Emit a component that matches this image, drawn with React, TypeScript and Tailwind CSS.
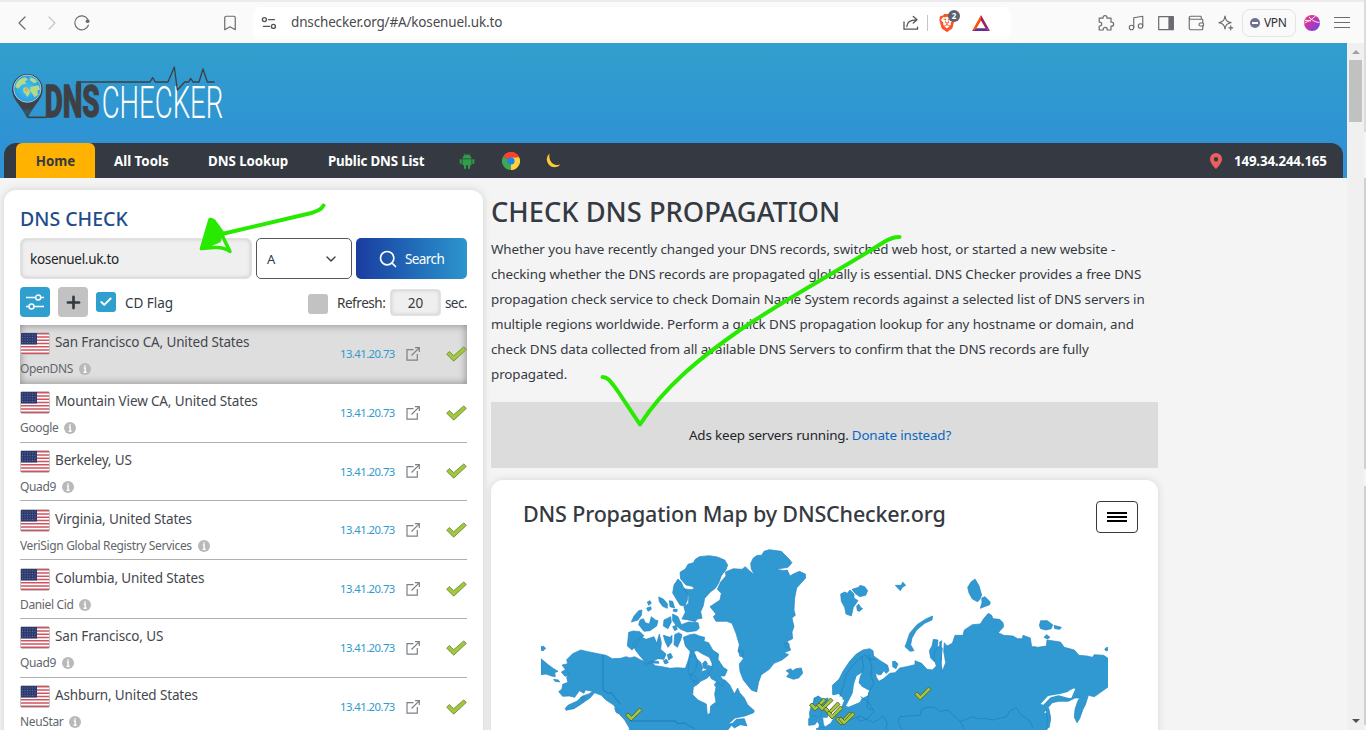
import type { ReactNode } from "react";
import { Bookmark, Music, Wallet, ChevronDown, Search, Plus, Check } from "lucide-react";
import { SiBrave } from "react-icons/si";

const FONT = "font-['Noto_Sans','Open_Sans',sans-serif]";

const servers = [
  { place: "San Francisco CA, United States", isp: "OpenDNS" },
  { place: "Mountain View CA, United States", isp: "Google" },
  { place: "Berkeley, US", isp: "Quad9" },
  { place: "Virginia, United States", isp: "VeriSign Global Registry Services" },
  { place: "Columbia, United States", isp: "Daniel Cid" },
  { place: "San Francisco, US", isp: "Quad9" },
  { place: "Ashburn, United States", isp: "NeuStar" },
];

const lines = [
  "Whether you have recently changed your DNS records, switched web host, or started a new website -",
  "checking whether the DNS records are propagated globally is essential. DNS Checker provides a free DNS",
  "propagation check service to check Domain Name System records against a selected list of DNS servers in",
  "multiple regions worldwide. Perform a quick DNS propagation lookup for any hostname or domain, and",
  "check DNS data collected from all available DNS Servers to confirm that the DNS records are fully",
  "propagated.",
];

function Stroke({ children, className = "" }: { children: ReactNode; className?: string }) {
  return (
    <svg viewBox="0 0 18 18" className={`h-[18px] w-[18px] shrink-0 ${className}`} fill="none" stroke="currentColor" strokeWidth="1.2" strokeLinecap="round" strokeLinejoin="round">
      {children}
    </svg>
  );
}

function BrowserBar() {
  return (
    <div className="flex h-[43px] w-[1364px] items-center border-t-2 border-[#ebebf0] bg-[#fafafa] pl-[13px] text-[#6b6b70]">
      <Stroke><path d="M12 3L6 9l6 6" /></Stroke>
      <Stroke className="ml-3 text-[#c4c4c8]"><path d="M6 3l6 6-6 6" /></Stroke>
      <Stroke className="ml-3">
        <path d="M15.4 11.2A7 7 0 1 1 14.8 5.2" />
        <circle cx="14.6" cy="7.2" r="1.9" fill="currentColor" stroke="none" />
      </Stroke>
      <Bookmark className="ml-[130px] h-[18px] w-[18px]" strokeWidth={1.6} />
      <div className="ml-[14px] flex h-8 w-[758px] items-center rounded-lg bg-white pr-[21px] pl-[7px]">
        <Stroke className="text-[#55555a]">
          <circle cx="4.4" cy="5.6" r="2" strokeWidth="1.4" />
          <path d="M8.5 5.6H14.5M3.5 12.4H9.5" strokeWidth="1.4" />
          <circle cx="13.4" cy="12.4" r="2" strokeWidth="1.4" />
        </Stroke>
        <span className="ml-[13px] text-[13.5px] tracking-[-0.16px] text-[#4a4a4e]">dnschecker.org/#A/kosenuel.uk.to</span>
        <Stroke className="ml-auto text-[#55555a]">
          <path d="M2 8v7.2h13.5v-2M4.8 12.6C5 8 8 5.800 14.500 5.800M11.300 2.500l3.700 3.300-3.700 3.300" strokeWidth="1.3" />
        </Stroke>
        <span className="ml-[7px] h-4 w-px bg-[#c4c4c8]" />
        <span className="relative ml-[10px] h-[18px] w-[18px]">
          <SiBrave className="h-[18px] w-[18px] text-[#fb542b]" />
          <span className="absolute -top-[4px] left-[10px] flex h-3 w-3 items-center justify-center rounded-full bg-[#5d6172] text-[8px] font-bold text-white">2</span>
        </span>
        <svg viewBox="0 0 18 18" className="ml-4 h-[18px] w-[18px]">
          <path d="M9 1L0 17 4.500 14.200 9 6.500z" fill="#ff5000" />
          <path d="M9 1l9 16-4.500-2.800L9 6.500z" fill="#9e1f63" />
          <path d="M0 17h18l-4.500-2.800h-9z" fill="#662d91" />
        </svg>
      </div>
      <Stroke className="ml-[86px]">
        <path d="M2.200 4.200H6V3.600a2 2 0 0 1 4 0v.6h4V8.200h.6a2 2 0 0 1 0 4H14V16H10.200v-.6a2 2 0 0 0-4 0V16H2.200V12h.6a1.900 1.900 0 0 0 0-3.800H2.200z" />
      </Stroke>
      <Music className="ml-3 h-[18px] w-[18px]" strokeWidth={1.5} />
      <Stroke className="ml-3"><rect x="1.700" y="2.700" width="14.600" height="13" /><path d="M12 3h4v12.400h-4z" fill="currentColor" /></Stroke>
      <Wallet className="ml-3 h-[18px] w-[18px]" strokeWidth={1.5} />
      <Stroke className="ml-3">
        <path d="M8 2C8.600 6.400 9.800 7.700 14 8.600 9.800 9.500 8.600 10.800 8 15 7.300 10.800 6.100 9.500 2 8.600 6.100 7.700 7.300 6.400 8 2z" />
        <path d="M13.800 11.800v4M11.800 13.800h4" />
      </Stroke>
      <div className="ml-[7px] flex h-7 w-[54px] items-center gap-1 rounded-lg border border-[#e3e3e8] pl-[7px] text-[12px] text-[#303034]">
        <span className="flex h-[10px] w-[10px] items-center justify-center rounded-full bg-[#6f7390]"><span className="h-[2px] w-[6px] bg-white" /></span>
        <span className="tracking-[-0.4px]">VPN</span>
      </div>
      <svg viewBox="0 0 16 16" className="ml-2 h-4 w-4">
        <defs>
          <linearGradient id="orb" x1="0" y1="0" x2="1" y2="1"><stop offset="0" stopColor="#f0456b" /><stop offset=".5" stopColor="#c035b5" /><stop offset="1" stopColor="#5b4be0" /></linearGradient>
        </defs>
        <circle cx="8" cy="8" r="8" fill="url(#orb)" />
        <path d="M.5 8Q6 6.500 11.500 1M5 2q4 5 10.500 5.500M1 5.500Q4 5 7 6" stroke="#fff" strokeWidth=".9" fill="none" />
      </svg>
      <div className="ml-[14px] flex w-4 flex-col gap-1">
        <span className="h-px bg-[#6b6b70]" /><span className="h-px bg-[#6b6b70]" /><span className="h-px bg-[#6b6b70]" />
      </div>
    </div>
  );
}

function Logo() {
  return (
    <svg viewBox="0 0 720 210" className="h-[70px] w-[240px]">
      <defs>
        <radialGradient id="sea"><stop offset="0" stopColor="#3fc4ee" /><stop offset="1" stopColor="#2a9fe0" /></radialGradient>
        <linearGradient id="pin" x1="0" y1="0" x2="0" y2="1"><stop offset=".5" stopColor="#3e4148" /><stop offset=".7" stopColor="#36566c" /><stop offset="1" stopColor="#3e4148" /></linearGradient>
      </defs>
      <path d="M82 174C74 146 36 124 36 88a46 46 0 0 1 92 0C128 124 90 146 82 174z" fill="url(#pin)" />
      <path d="M44 112L82 174l38-62z" fill="url(#pin)" />
      <path d="M82 172h56" stroke="#3e4045" strokeWidth="5" />
      <circle cx="82" cy="86" r="41" fill="url(#sea)" stroke="#d5eefa" strokeWidth="2" />
      <path d="M48 72q10-18 28-20l8 8-10 4 6 6-14 4-12 12-8-6z M92 52l14 6 6 8-10 4-8-6-6-4z M92 80l24-4 4 12-8 4 2 12-10 8-8-12-6-8z" fill="#b5d98a" />
      <path d="M70 84l8-2 10 6 2 10-8 14-6-10-6-6z" fill="#b5d98a" />
      <path d="M74 86l6-3 5 6-5 6-6-3z" fill="#eca437" />
      <text transform="translate(134 172) scale(0.62 1)" fontFamily="Roboto, sans-serif" fontWeight="800" fontSize="132" fill="#3e4045" stroke="#3e4045" strokeWidth="4" textLength="266" lengthAdjust="spacingAndGlyphs">DNS</text>
      <text transform="translate(305 173) scale(0.614 1)" fontFamily="Roboto, sans-serif" fontWeight="300" fontSize="134" fill="#fff" textLength="594" lengthAdjust="spacingAndGlyphs">CHECKER</text>
      <path d="M229 64h14v30h-14z" fill="#3e4045" />
      <path d="M230 66H450l8-13 8 13h38l19-45 9 69 22-24h12l6-11 7 11h18l12-39 13 39h22" fill="none" stroke="#3e4045" strokeWidth="4" strokeLinejoin="round" />
    </svg>
  );
}

function ChromeLogo() {
  return (
    <svg viewBox="0 0 18 18" className="h-[18px] w-[18px]">
      <path d="M9 9L1.200 4.500A9 9 0 0 1 16.800 4.500z" fill="#f4442e" />
      <path d="M9 9l7.800-4.500A9 9 0 0 1 9 18z" fill="#fdd23a" />
      <path d="M9 9v9A9 9 0 0 1 1.200 4.500z" fill="#3ea852" />
      <path d="M9 5.500h7.300a9 9 0 0 1-7.300 12.500l3.500-7z" fill="#fdd23a" />
      <path d="M9 5.200L1.800 3.800A9 9 0 0 1 16.600 4.200L16.900 5.200z" fill="#f4442e" />
      <circle cx="9" cy="9" r="3.600" fill="#1a84f0" />
    </svg>
  );
}

function Header() {
  return (
    <header className="flex h-[135px] flex-col bg-linear-to-b from-[#319fcd] to-[#2f92d4] to-75%">
      <div className="h-[100px] pt-[17px]"><Logo /></div>
      <nav className="mr-1 ml-1 flex h-[35px] items-stretch rounded-t-xl bg-[#353a42] pl-3 text-[13.3px] font-bold text-white">
        <div className="flex w-[79px] items-center justify-center rounded-t-md bg-[#ffb200] pt-[2px] text-[#353a42]">Home</div>
        <div className="ml-[19px] flex w-[94px] items-center pt-[2px] whitespace-nowrap">All Tools</div>
        <div className="flex w-[120px] items-center pt-[2px] tracking-[-0.05px] whitespace-nowrap">DNS Lookup</div>
        <div className="flex w-[131px] items-center pt-[2px] tracking-[-0.15px] whitespace-nowrap">Public DNS List</div>
        <svg viewBox="0 0 16 16" className="h-4 w-4 self-center" fill="#2f9e44">
          <path d="M3.500 5.500a4.500 4 0 0 1 9 0z M3.500 6.200h9v6h-9z M.7 6.300h2v4.500h-2z M13.300 6.300h2v4.500h-2z M5 12h2v3.700H5z M9 12h2v3.700H9z" />
          <path d="M5 .6l1.200 1.800M11 .6L9.800 2.400" stroke="#2f9e44" strokeWidth=".7" />
        </svg>
        <div className="ml-[27px] flex items-center"><ChromeLogo /></div>
        <svg viewBox="0 0 16 16" className="ml-[25px] h-4 w-4 self-center"><path d="M4.500.5A7.800 7.800 0 1 0 15.500 11.500C9.500 13.500 3 9 4.500.5z" fill="#fdcb33" /></svg>
        <svg viewBox="0 0 12 16" className="ml-auto h-4 w-3 self-center"><path fillRule="evenodd" d="M6 0a6 6 0 0 1 6 6c0 4.500-6 10-6 10S0 10.500 0 6a6 6 0 0 1 6-6zm0 4a2.200 2.200 0 1 0 0 4.400A2.200 2.200 0 0 0 6 4z" fill="#eb5f5f" /></svg>
        <span className="ml-3 w-[109px] self-center pt-[2px] tracking-[-0.15px]">149.34.244.165</span>
      </nav>
    </header>
  );
}

function Flag() {
  return (
    <svg viewBox="0 0 30 23" className="h-[23px] w-[30px] shrink-0">
      <rect x=".5" y=".5" width="29" height="22" rx="1.500" fill="#fff" stroke="#c4c4c4" />
      <path d="M1 1.800h28M1 5h28M1 8.200h28M1 11.500h28M1 14.800h28M1 18h28M1 21.300h28" stroke="#cc5560" strokeWidth="1.500" />
      <path d="M1 1h16v11.500H1z" fill="#2c3a6e" />
      <path d="M2 3h14M2 5.500h14M2 8h14M2 10.500h14" stroke="#6f7dae" strokeWidth=".8" strokeDasharray="1 1.500" />
    </svg>
  );
}

function Tick() {
  return (
    <svg viewBox="0 0 21 16" className="h-4 w-[21px]">
      <path d="M.7 8.200L3.300 5.500 7.700 9.700 17.800.9 20.300 3.400 7.700 15.200z" fill="#a2c93e" stroke="#71893f" strokeWidth=".9" strokeLinejoin="round" />
    </svg>
  );
}

function Info() {
  return (
    <svg viewBox="0 0 12 12" className="h-3 w-3"><circle cx="6" cy="6" r="6" fill="#b9b9b9" /><path d="M6 2.200v1.500M4.800 5h1.400v4M4.600 9.200h3" stroke="#fff" strokeWidth="1.400" fill="none" /></svg>
  );
}

function CheckPanel() {
  return (
    <section className="mt-3 ml-1 flex h-[560px] w-[479px] flex-col rounded-t-xl bg-white px-4 pt-[15px] shadow-[0_0_8px_rgba(0,0,0,0.15)]">
      <h2 className="h-[33px] text-[19.500px] leading-[28px] font-medium whitespace-nowrap text-[#1f4c89]">DNS CHECK</h2>
      <div className="flex h-[41px] gap-1">
        <div className="flex w-[232px] items-center rounded-md border border-[#e2e2e2] bg-[#efefef] pt-[2px] pl-[9px] text-[13.5px] tracking-[-0.3px] text-[#212529] shadow-[inset_0_0_4px_rgba(0,0,0,0.18)]">kosenuel.uk.to</div>
        <div className="flex w-24 items-center justify-between rounded-[5px] border border-[#55595e] pt-[2px] pr-3 pl-[10px] text-[13px] text-[#353a42]">A<ChevronDown className="mb-[2px] h-4 w-4" strokeWidth={2} /></div>
        <div className="flex w-[111px] items-center rounded-[5px] bg-linear-to-r from-[#1b3ca0] to-[#2e95cd] pl-[22px] text-[13.5px] text-white"><Search className="mr-[7px] h-5 w-5" strokeWidth={2} /><span className="pt-[2px] tracking-[-0.6px]">Search</span></div>
      </div>
      <div className="mt-2 flex h-[30px] items-center text-[13.5px] text-[#353a42]">
        <div className="flex h-[30px] w-[30px] items-center justify-center rounded bg-[#2f9fd0]">
          <svg viewBox="0 0 18 16" className="h-4 w-[18px]" fill="none" stroke="#fff" strokeWidth="1.400"><path d="M0 3.500h9.500M15 3.500h3M0 12.500h3M8 12.500h10" /><circle cx="12.200" cy="3.500" r="2.500" /><circle cx="5.500" cy="12.500" r="2.500" /></svg>
        </div>
        <div className="ml-2 flex h-[30px] w-[30px] items-center justify-center rounded bg-[#c2c2c2]"><Plus className="h-[19px] w-[19px] text-[#353a42]" strokeWidth={3.4} /></div>
        <div className="ml-2 flex h-5 w-5 items-center justify-center rounded-[3px] bg-[#2f9fd0]"><Check className="h-[14px] w-[14px] text-white" strokeWidth={3.2} /></div>
        <span className="mt-[3px] ml-[9px] tracking-[-0.05px]">CD Flag</span>
        <div className="mt-[3px] ml-auto h-5 w-5 rounded-[3px] bg-[#c2c2c2]" />
        <span className="mt-[3px] ml-[9px] w-[53px] tracking-[-0.45px]">Refresh:</span>
        <div className="mt-[1px] flex h-[27px] w-[51px] items-center justify-center rounded border border-[#e2e2e2] bg-[#efefef] pt-px shadow-[inset_0_0_4px_rgba(0,0,0,0.18)]">20</div>
        <span className="mt-[3px] ml-1 w-[22px] tracking-[-0.6px]">sec.</span>
      </div>
      <div className="mt-2 flex flex-col">
        {servers.map((s, i) => (
          <div key={i} className={`flex h-[58.8px] shrink-0 items-center ${i === 0 ? "bg-[#dedede] shadow-[inset_0_0_8px_rgba(0,0,0,0.4)]" : "border-b border-[#b0b0b0]"}`}>
            <div className="flex h-full flex-1 flex-col pt-[7.400px]">
              <div className="flex h-[23px] gap-[5px]"><Flag /><span className="text-[13.5px] leading-[20px] tracking-[-0.14px] whitespace-nowrap text-[#43474d]">{s.place}</span></div>
              <div className="mt-[5px] flex items-center gap-[6px] text-[12px] leading-[18px] tracking-[-0.36px] whitespace-nowrap text-[#62666b]">{s.isp}<Info /></div>
            </div>
            <span className="w-[66px] pt-[1px] text-[11.300px] tracking-[-0.55px] text-[#2f9acb]">13.41.20.73</span>
            <svg viewBox="0 0 14 14" className="h-[14px] w-[14px]" fill="none" stroke="#7b8187" strokeWidth="1.200"><path d="M7.500 2.700H1v10.500h10.300V7M9 .7h4.300V5M13.200.8L5.500 8.500" /></svg>
            <span className="ml-[26px]"><Tick /></span>
          </div>
        ))}
      </div>
    </section>
  );
}

const LAND = "#3099d1";
const EDGE = "#2585c4";

function WorldMap() {
  return (
    <svg viewBox="541 548 567 182" className="h-[182px] w-[567px]" fill={LAND} stroke={EDGE} strokeWidth="2" strokeLinejoin="round">
      <g transform="translate(480 470) scale(0.33333)">
        <path d="M183 530l8-1 6 6-7 7-7-1z M183 566l20 17 18 13 13 8-10 4 2 12-12-2-16-6-15 2z M221 628l14 2 4 6-14-2z M244 606l16-9 12 5-3 14-14 3z" />
        <path d="M256 715l8-9 28-13 14-14 22-8 10-7-22-4-4 10-14-8-14 20-16-4-20 1-12-14 10-8 2-14 16-6-4-14 9-14-14-12-9-12 17-4-3-12 18-18 24-11 22 5 30 6 24 5 19 10 25-1 16-5 12 4 14-4 20 11 20 6 6-4 16 14 20 3 24 5 22-2 24 2 10-28 6-28 9 4 10 24 11 10 6 16-4 12 14-4 5-16 13 5-2 20-12 14-20 10-22 18-2 22 16 16 25 12 3 32 8-4 2-22 16-12-4-24 4-20-5-8 12-16 20 2 14 14 14 28 10-18 6 14 14 16 10 20 20 18-2 6-26 10-30 6-20 18 12-2 12-12 24-2 8 22-20-4-18 10-8-8-20 24v10H448v-26l-14-24-20-22-12-22-24-16-14-14-20-8-14 16-26 18-22 14-24 5z" />
        <path d="M628 560l16-4 8 16-4 24-14 22-10-10z M668 580l8-8 6 8-4 16-8-2z M628 612l14 4 12 14-8 4-14-8z M404 715l10 2 2 14-8-4z M302 683l12-2-4 12z M638 632l20 6-10 8z" />
        <path d="M446 487l14-4 20 2 12 12-14 12-10 18-12 13-14-12z M482 500l16 8 24-8 8 20 8-28 6 26-2 20 16 14-6 16-18-2-20 10-22-4-12-14-14-18-8-20z M495 577l20-3 20 0 2 6-20-1-22 4z M550 572l10-4 5 10-10 4z" />
        <path d="M486 420l-2 16-10 14-20 6 8-18 14-16z M480 450l10-4 6 12 12 4 6-22 12 10 8 2-4 16-20 14-18 2-8-10-8-10z M552 450l8-4 12-6 2 16-10 20-14-8z M578 432l16 8 10 24 22-8 28 2 4 16-8 8-28 4-20-8-12-10-12-16z M578 470l10-4 4 12-8 4z M536 381l14 6 12 14 0 14-14-6-10-14z M568 392l10 2 6 20-14-4z M502 396l8-4 4 8-8 6z M500 414l12-4 2 8-10 6z M580 418l12 0-2 8-10-2z" />
        <path d="M550 496l20 6 6-6 0 20-12 16-8-16z M584 494l12-6 10 6-4 16-10 22-10-8z M562 554l10-4 6 12-12 8z" />
        <path d="M610 502l20-8 14-2 14 6 16 4-2 12 14 4 12 22 18 12-2 16 16 24 12 8-8 18-14 0 10 12-2 20-16-14-18-10-8-16 10-14 0-16-8-18-24-12-12-8-20 4-16-18z" />
        <path d="M594 327l10 10 6 14 14 16-2 24-8 18-14-4-10-16-12-20 4-24z" />
        <path d="M640 278l6-10 12-8 30-3 24 4 22 9 9 15-5 14-14 18-8 22-10 16-14 10-18 20-4 22-8 18 4 20-14 2-6 8-24-6-16-2 10-20-4-16 14-12 0-20-14-22 22 2 10-4-8-6-18-4-16-18-2-20 16-10 8-14z" />
        <path d="M814 298L812 280 820 264 832 256 845 256 852 244 868 239 904 244 928 268 936 278 924 292 888 298 912 302 922 300 930 318 940 312 958 304 976 312 977 324 950 354 944 384 942 420 946 436 936 444 942 470 936 486 938 506 922 514 932 540 912 548 926 554 906 570 882 580 868 598 844 614 836 636 830 666 814 660 790 630 780 604 778 582 790 566 774 544 778 524 768 490 756 460 740 454 708 454 700 440 708 432 690 410 720 390 724 370 712 358 722 336 738 318 736 306 760 296 786 298 796 290 808 302 824 314z" />
        <path d="M776 542l12-2 2 16-10 4z M918 602l14-6 6 6 10-6 16-2 4 16-12 14-16 4-20-8 8-10z M914 518l14 4-4 12-8-2z" />
        <path d="M1002 684l14-6 4 18 12 8 14 26-4 12-14 0 2 18 10 30h-26l4-26-6-10-8 10-18 2 0-20 10-10z" />
        <path d="M369 556v104l14 10 10-2 16 20 12 14M448 753h138l8 8 20-2 30 18" fill="none" strokeWidth="4" />
      </g>
      <g transform="translate(800 530) scale(0.33333)">
        <path d="M122 192l12-6 8 4 8-10 12 12 0 12 12 8-14 20-6 26-16-6-4-20-10-18z M156 178l20-6 4-6 14 4 9 12-6 14-18 4-14-10z M170 228l6-6 6 10 6 4-10 8-6-2z M286 166l18 0 4-10 9 10-10 6-6 10-8-8z" />
        <path d="M503 172l10-16 12-9 12 20 8 28-6 14-6 6-16-8-10-18z M545 204l10-4 16 16-2 8-28 11 5-18z" />
        <path d="M398 258l-2 12-22 10-24 20-14 24-4 20 10 18-12 2-15-14 6-16 8-24 22-26 28-18z M388 362l8-14 4-20 14 2-2 24 0 32-8 10-12-12z M419 336l6-4-2 30 2 26-4 22-9 10 8-26z M278 394l8 0 8 8-6 14-10-6z" />
        <path d="M718 286l4-14 20 0 16 12-4 12-16 4-16-4z M762 286l22 6-4 6-16-2z M732 322l8-8 10 8-8 5z M914 357l8-6 2 10-6 2z" />
        <path d="M98 494l-1-28 20-18 12-24 20-30 20-22 20-12 20-4 10 6 2 16 20 14 22 14 4 16-12 12-20 0-8-6 2 14 8 12 16-10 16-14 16-2 14-14 20-4 26-6 0-12 20 8 16 18 16 2 12-12-8-24 4-22 12-14 10 6-4 40 4 30 10-26-6-34 2-26 8 10 16-8 8-24h24l4-16 24-16 24-2 10-16 14-16 10 6 4 10 20 2 10 10 2 12-16 18 16 8 28 2 14 8h14l2-10 22 8 4 26 10 0 8 2 26-4 2-18 40 6 12 16 30 8 14 16 24 2 16 4 6-8 28 2 20 14v60l-6 12-2 10-20 14-20 14-18-4-8 26-8 16-10 28-8 12-8-16 2-24 8-24 6-10-14 0-20 10-28 0-20 4-26 30 14 4 6 20-10 22v30H68l-4-14-16-14 28-6 16-10 16-26 16-20 10-24z" />
        <path d="M738 540l8-6 6 28-4 30-8 4 3-28z M28 550l6-24 20-28 16 10 14-4 0 14-14 16-6 22-14 8-4-8-16 6z" />
        <path d="M186 428l-16 10-8 24-4 28-20 38 8 2 34-14 4-10 20-10 4-14-22-12-10-12 4-20z M96 530l-2-16 30-6-4 22z M96 508l4-12 16-4 12 12-6 18-16-6z M722 522l22-24 36-6 32-8 14-8-12 28-8 0-30-8-24 6-22 22z M240 440l12-16 8 10-14 14z M804 484l20-10-6 20z" fill="#fff" stroke="none" />
        <path d="M120 500l12-40 8-30 22-28 22-20 12-8 10 14 20 0M186 380l4 30-4 18M206 374l10 40-4 22 10 24-16 28-2 26 18 30-16 20-24 10-14-12M182 500l20 14 0 20 20 6M150 570l30-12 40 20 30-20 12 20-4 20M294 576l6-16 60-4 6-20 30-6 14 6 10 8 24-4 14 14 22 20 20-6 16-8 20 6 20 0 24 4 40-10 10-18 20-8 12 20 24 16 14 24M294 576l12 24M480 572l14 28" fill="none" strokeWidth="3" />
      </g>
      <g fill="#a2c93e" stroke="#5d6b2d" strokeWidth="1">
        {[[625, 708], [914, 687], [809, 698], [816, 698], [823, 702], [826, 706], [835, 712], [838, 712]].map(([x, y], i) => (
          <path key={i} transform={`translate(${x} ${y})`} d="M.5 7L3 5l3.500 3.500L14.500 0 17 2.500 6 13z" />
        ))}
      </g>
    </svg>
  );
}

function Content() {
  return (
    <section className="ml-2 flex w-[667px] flex-col">
      <h1 className="mt-[16px] h-[38px] text-[27.300px] leading-[36px] font-medium whitespace-nowrap text-[#353a42]">CHECK DNS PROPAGATION</h1>
      <div className="mt-[5px] flex h-[150px] flex-col text-[13.4px] leading-[25px] tracking-[-0.095px] text-[#353a42]">
        {lines.map((l) => <span key={l} className="whitespace-nowrap">{l}</span>)}
      </div>
      <div className="mt-[15px] flex h-[66px] shrink-0 items-center justify-center gap-[3px] bg-[#dcdcdc] pr-[9px] text-[13.4px] tracking-[-0.16px] text-[#212529]">
        <span>Ads keep servers running.</span><span className="text-[#0b66c3]">Donate instead?</span>
      </div>
      <div className="mt-3 flex h-[270px] shrink-0 flex-col rounded-t-xl bg-white pt-[21px] shadow-[0_0_8px_rgba(0,0,0,0.12)]">
        <div className="flex justify-between pr-5 pl-8">
          <h2 className="text-[21.500px] leading-[25px] font-medium tracking-[-0.16px] whitespace-nowrap text-[#353a42]">DNS Propagation Map by DNSChecker.org</h2>
          <div className="flex h-8 w-[42px] flex-col items-center justify-center gap-[2px] rounded border border-[#353a42]">
            <span className="h-[2px] w-5 bg-black" /><span className="h-[2px] w-5 bg-black" /><span className="h-[2px] w-5 bg-black" />
          </div>
        </div>
        <div className="mt-[15px] ml-[50px]"><WorldMap /></div>
      </div>
    </section>
  );
}

function Annotations() {
  return (
    <svg viewBox="0 0 1366 730" className="pointer-events-none absolute top-0 left-0 h-[730px] w-[1366px]" fill="none" stroke="#27ea00" strokeWidth="4" strokeLinecap="round" strokeLinejoin="round">
      <path d="M323.500 205.500C321 211 313 213 305 214.500L222 234" />
      <path d="M210 219.500L201.500 248.500L219 241L222 232L214 221z" fill="#27ea00" strokeWidth="3.500" />
      <path d="M212 220L221 233L230 251.500Q225 247 214 247.500L201.500 248.500" strokeWidth="3.500" />
      <path d="M602.500 377C608 377 611 382 617 390L640 424.500C665 386 700 358 740 330C790 296 840 270 884 242Q892 237 899.500 237" />
    </svg>
  );
}

export default function App() {
  return (
    <div className={`relative flex h-[730px] w-[1366px] overflow-hidden bg-[#f4f4f4] ${FONT}`}>
      <div className="flex w-[1364px] flex-col">
        <BrowserBar />
        <div className="flex h-[687px]">
          <main className="w-[1347px] overflow-hidden">
            <Header />
            <div className="flex h-[552px] overflow-hidden"><CheckPanel /><div className="flex flex-col"><Content /></div></div>
          </main>
          <div className="flex w-[17px] flex-col items-center bg-[#f0f0f0] pt-[7px] pb-[7px]">
            <svg viewBox="0 0 8 4" className="h-1 w-2"><path d="M0 4l4-4 4 4z" fill="#a0a0a0" /></svg>
            <div className="mt-[6px] h-[62px] w-[13px] bg-[#c1c1c1]" />
            <svg viewBox="0 0 8 4" className="mt-auto h-1 w-2"><path d="M0 0l4 4 4-4z" fill="#505050" /></svg>
          </div>
        </div>
      </div>
      <div className="flex w-[2px] flex-col">
        <div className="h-[132px] bg-[#dcdcdc]" /><div className="mt-[46px] h-[291px] bg-[#d0d0d0]" /><div className="mt-[17px] h-[239px] bg-[#d0d0d0]" />
      </div>
      <Annotations />
    </div>
  );
}
